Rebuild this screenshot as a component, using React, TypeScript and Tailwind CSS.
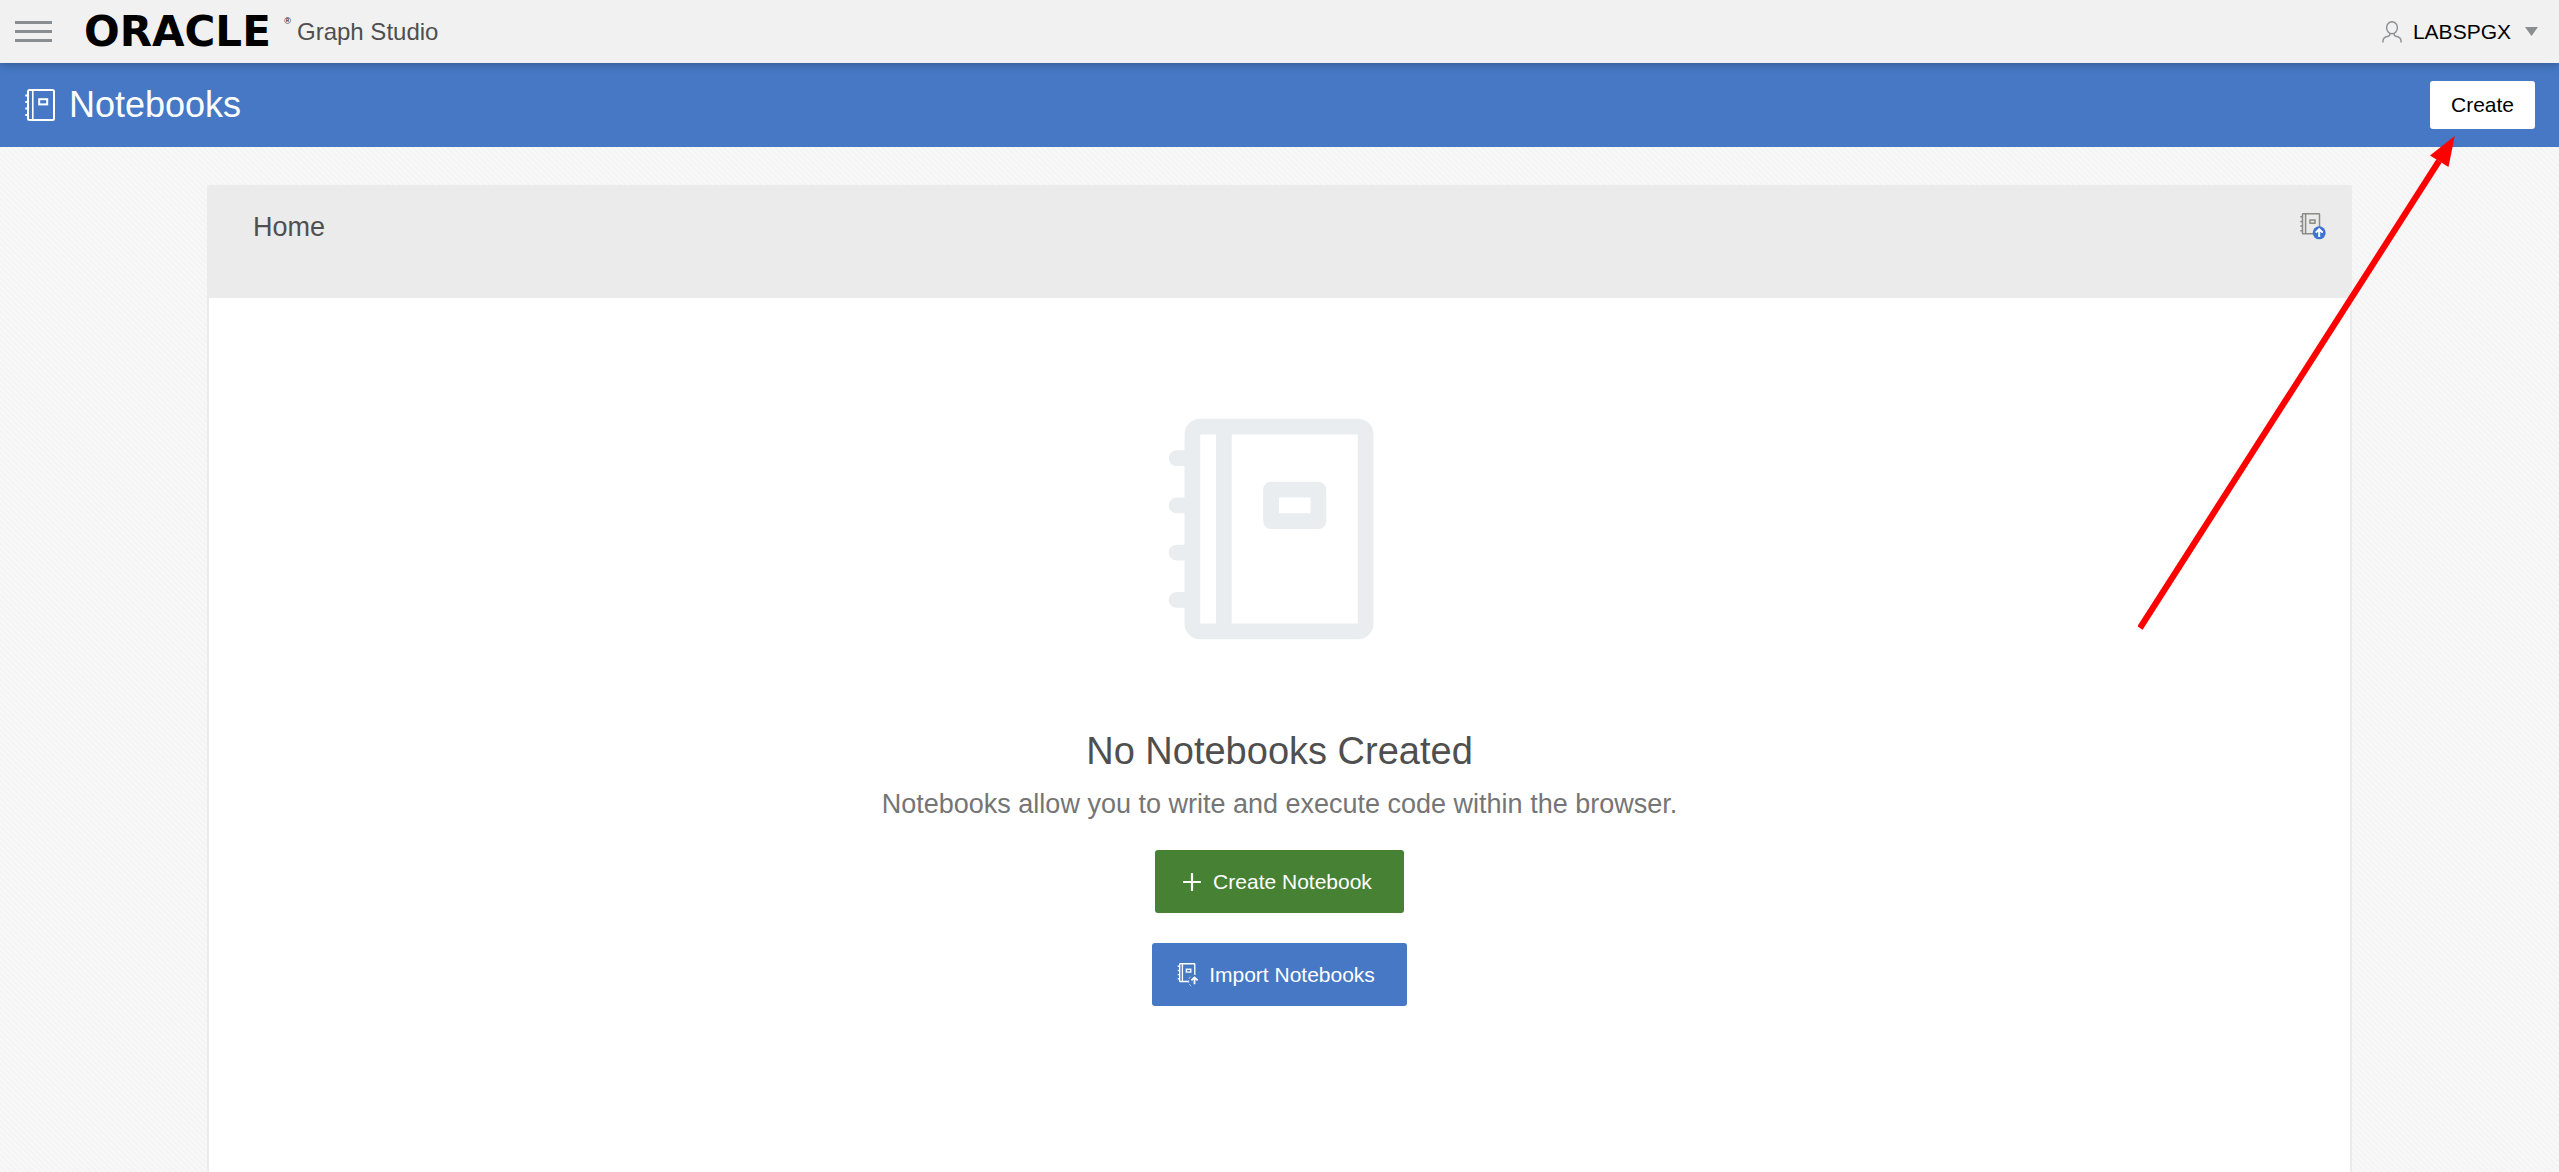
import React from "react";

function NotebookOutline({ className }: { className: string }) {
  return (
    <svg viewBox="0 0 30 32" className={className} fill="none" stroke="currentColor" aria-hidden="true">
      <rect x="3" y="1" width="26" height="30" rx="1.5" strokeWidth="2" />
      <path d="M7.8 2v28" strokeWidth="1.6" />
      <path d="M.3 6.5H3M.3 13H3M.3 19.5H3M.3 26H3" strokeWidth="2" />
      <rect x="14.2" y="10.2" width="8" height="5.2" strokeWidth="2" />
    </svg>
  );
}

function NotebookSolid({ className }: { className: string }) {
  return (
    <svg viewBox="0 0 16 16" className={className} fill="none" stroke="currentColor" strokeWidth="1" aria-hidden="true">
      <rect x="2.5" y="1.5" width="11" height="13" rx=".5" />
      <path d="M4.5 1.5v13" />
      <path d="M2 3.5h-.5M2 6.5h-.5M2 9.5h-.5M2 12.5h-.5" strokeLinecap="round" />
      <rect x="7.5" y="5.5" width="3" height="2" strokeLinejoin="round" />
    </svg>
  );
}

function NotebookImport({ className, badge, ring }: { className: string; badge: string; ring: string }) {
  return (
    <svg viewBox="0 0 26 27" className={className} fill="none" aria-hidden="true">
      <g stroke="currentColor" strokeWidth="1.5">
        <rect x="2.5" y=".8" width="17" height="20" rx=".6" />
        <path d="M5.6 1v19.4M.3 3.7h2M.3 8.4h2M.3 13h2M.3 17.7h2" />
        <rect x="10" y="7" width="5" height="3.2" />
      </g>
      <circle cx="19.2" cy="19.8" r="6.5" fill={badge} />
      {ring !== "none" && <path d="M15.5 26a7 7 0 0 1 0-11.5" stroke={ring} strokeDasharray="3 1.5" />}
      <path d="M19.2 24v-7.4M15.7 19.6l3.5-3.4 3.5 3.4" stroke="#ffffff" strokeWidth="2" />
    </svg>
  );
}

function Header() {
  return (
    <header className="relative z-10 flex h-[63px] shrink-0 items-center justify-between bg-[#f1f1f1] pr-[21px] pl-[15px] shadow-[0_0_10px_rgba(0,0,0,0.35)]">
      <div className="flex items-center">
        <button type="button" aria-label="Menu" className="flex w-[37px] flex-col gap-1.5">
          <span className="h-[3px] bg-[#8b8e91]" />
          <span className="h-[3px] bg-[#8b8e91]" />
          <span className="h-[3px] bg-[#8b8e91]" />
        </button>
        <a href="#home" className="ml-8 flex w-[213px] items-center justify-between pr-1.5 text-black">
          <span className="font-['DejaVu_Sans',sans-serif] text-[42px] leading-none font-bold">ORACLE</span>
          <span className="mb-5 text-[9px] leading-none">®</span>
        </a>
        <span className="text-2xl text-[#4f4f4f]">Graph Studio</span>
      </div>
      <button type="button" className="flex items-center text-[21px] text-black">
        <svg viewBox="0 0 20 22" className="mr-[11px] h-[22px] w-5" fill="none" stroke="#8b8e91" strokeWidth="1.4" aria-hidden="true">
          <ellipse cx="10" cy="6.7" rx="5.4" ry="6" />
          <path d="M1 21.5v-1.8c0-3.2 2.3-3.9 5-4.5 1.5-.4 2-.9 2-2.5M19 21.5v-1.8c0-3.2-2.3-3.9-5-4.5-1.5-.4-2-.9-2-2.5" />
        </svg>
        LABSPGX
        <svg viewBox="0 0 13 9" className="ml-3.5 h-[9px] w-[13px]" fill="#8b8e91" aria-hidden="true">
          <path d="M0 0h13L6.5 9z" />
        </svg>
      </button>
    </header>
  );
}

function TitleBar() {
  return (
    <div className="flex h-[84px] shrink-0 items-center justify-between bg-[#4678c5] pr-6 pl-[25px] text-white">
      <h1 className="flex items-center gap-3.5 text-4xl">
        <NotebookOutline className="h-8 w-[30px]" />
        Notebooks
      </h1>
      <button type="button" className="h-12 rounded-[3px] bg-white px-[21px] text-[21px] text-black">
        Create
      </button>
    </div>
  );
}

function EmptyState() {
  return (
    <div className="flex flex-col items-center pt-[105px] pb-48">
      <NotebookSolid className="mr-0.5 size-[252px] text-[#e9edf0]" />
      <h3 className="mt-[73px] text-[38px] leading-[46px] text-[#4f4f4f]">No Notebooks Created</h3>
      <p className="mt-3.5 text-[27px] leading-8 text-[#757575]">
        Notebooks allow you to write and execute code within the browser.
      </p>
      <button type="button" className="mt-[30px] flex h-[63px] items-center rounded-[3px] bg-[#478134] pr-8 pl-7 text-[21px] text-white">
        <svg viewBox="0 0 18 18" className="mr-3 size-[18px]" stroke="currentColor" strokeWidth="2.2" strokeLinecap="round" aria-hidden="true">
          <path d="M9 1v16M1 9h16" />
        </svg>
        Create Notebook
      </button>
      <button type="button" className="mt-[30px] flex h-[63px] items-center rounded-[3px] bg-[#4678c5] pr-8 pl-[25px] text-[21px] text-white">
        <NotebookImport className="mr-2 size-6" badge="#4678c5" ring="#c9d6ee" />
        Import Notebooks
      </button>
    </div>
  );
}

function PointerArrow() {
  return (
    <svg viewBox="0 0 320 500" className="pointer-events-none absolute top-[132px] right-[101px] z-20 h-[500px] w-80" aria-hidden="true">
      <path d="M2 496L301 29" stroke="#ff0000" strokeWidth="6.2" />
      <path d="M316.7 4L310.5 35L292 23.5z" fill="#ff0000" />
    </svg>
  );
}

export default function App() {
  return (
    <div className="relative flex h-screen flex-col overflow-hidden bg-[repeating-linear-gradient(45deg,#f4f4f4_0px,#f4f4f4_1px,#f8f8f8_2px,#f8f8f8_3px,#f4f4f4_4px)] font-['Liberation_Sans',sans-serif]">
      <Header />
      <TitleBar />
      <main className="flex-1 px-[207px] pt-[38px]">
        <section className="rounded-t-[3px] border-x-2 border-[#ebebeb] bg-white">
          <div className="flex h-[113px] items-start justify-between bg-[#ebebeb] pt-[26px] pr-6 pl-11">
            <h2 className="text-[27px] leading-8 text-[#4f4f4f]">Home</h2>
            <button type="button" aria-label="Import notebooks" className="pt-0.5 text-[#8b8b86]">
              <NotebookImport className="h-[27px] w-[26px]" badge="#3f71d2" ring="none" />
            </button>
          </div>
          <EmptyState />
        </section>
      </main>
      <PointerArrow />
    </div>
  );
}
